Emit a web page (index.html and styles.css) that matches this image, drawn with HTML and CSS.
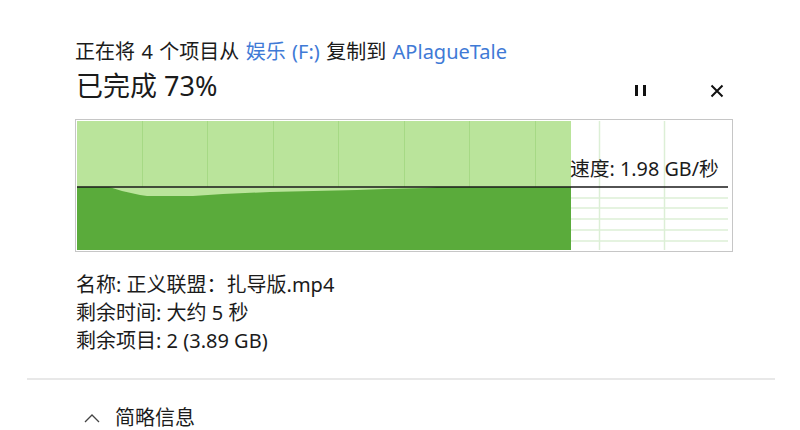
FILE: index.html
```html
<!DOCTYPE html>
<html lang="zh-CN">
<head>
<meta charset="utf-8">
<link rel="stylesheet" href="styles.css">
</head>
<body>
<div class="dialog">
  <div class="main">
    <div class="title">正在将 4 个项目从 <span class="link">娱乐 (F:)</span> 复制到 <span class="link">APlagueTale</span></div>
    <div class="status">
      <div class="percent">已完成 73%</div>
      <div class="controls">
        <svg class="icon pause" width="14" height="14" viewBox="0 0 14 14"><rect x="1" y="1" width="3" height="11" fill="#111"/><rect x="9" y="1" width="3" height="11" fill="#111"/></svg>
        <svg class="icon close" width="14" height="14" viewBox="0 0 14 14"><path d="M1.5 1.5 L12.5 12.5 M12.5 1.5 L1.5 12.5" stroke="#111" stroke-width="2" fill="none"/></svg>
      </div>
    </div>
    <div class="graph">
      <svg width="654" height="129" viewBox="0 0 654 129">
        <rect x="0" y="0" width="494" height="66" fill="#bae49b"/>
        <rect x="0" y="66" width="494" height="63" fill="#5aab3b"/>
        <polygon points="32,66 45,70 63,74 70,75 116,75 146,73 193,71 280,69 308,68 350,67 360,66" fill="#bae49b"/>
        <g stroke="#a6d985" stroke-width="1">
          <line x1="65.5" y1="0" x2="65.5" y2="66"/>
          <line x1="130.5" y1="0" x2="130.5" y2="66"/>
          <line x1="196.5" y1="0" x2="196.5" y2="66"/>
          <line x1="261.5" y1="0" x2="261.5" y2="66"/>
          <line x1="327.5" y1="0" x2="327.5" y2="66"/>
          <line x1="392.5" y1="0" x2="392.5" y2="66"/>
          <line x1="458.5" y1="0" x2="458.5" y2="66"/>
        </g>
        <g stroke="#dcefd6" stroke-width="1.5">
          <line x1="522.5" y1="0" x2="522.5" y2="129"/>
          <line x1="587.5" y1="0" x2="587.5" y2="129"/>
          <line x1="494" y1="77" x2="651" y2="77"/>
          <line x1="494" y1="87" x2="651" y2="87"/>
          <line x1="494" y1="98" x2="651" y2="98"/>
          <line x1="494" y1="109" x2="651" y2="109"/>
          <line x1="494" y1="120" x2="651" y2="120"/>
        </g>
        <line x1="0" y1="66" x2="651" y2="66" stroke="#1a1a1a" stroke-width="1.5"/>
      </svg>
      <div class="speed">速度: 1.98 GB/秒</div>
    </div>
    <div class="details">
      <div>名称: 正义联盟：扎导版.mp4</div>
      <div>剩余时间: 大约 5 秒</div>
      <div>剩余项目: 2 (3.89 GB)</div>
    </div>
  </div>
  <div class="separator"></div>
  <div class="footer">
    <svg class="chevron" width="16" height="10" viewBox="0 0 16 10"><path d="M1 9 L8 2 L15 9" stroke="#444" stroke-width="1.3" fill="none"/></svg>
    <span>简略信息</span>
  </div>
</div>
</body>
</html>
```
FILE: styles.css
```css
html, body {
  margin: 0;
  padding: 0;
  background: #ffffff;
}
body {
  font-family: "Noto Sans", "Noto Sans CJK SC", sans-serif;
  color: #1b1b1b;
  width: 800px;
  height: 430px;
  overflow: hidden;
}
.dialog {
  padding-top: 38px;
}
.main {
  padding-left: 75px;
  width: 657px;
}
.title {
  font-size: 20px;
  word-spacing: 1.2px;
  line-height: 28px;
  height: 28px;
  white-space: nowrap;
}
.link {
  color: #3f7ad6;
}
.status {
  display: flex;
  align-items: center;
  justify-content: space-between;
  height: 40px;
}
.percent {
  font-size: 27px;
  line-height: 34px;
  padding-left: 1px;
}
.controls {
  display: flex;
  align-items: center;
  gap: 62px;
  padding-right: 8px;
  padding-top: 9px;
}
.icon {
  display: block;
}
.graph {
  position: relative;
  margin-top: 13px;
  width: 654px;
  height: 129px;
  border: 1px solid #c6c6c6;
  padding: 1px;
}
.graph svg {
  display: block;
}
.speed {
  position: absolute;
  left: 494px;
  top: 36px;
  font-size: 19.8px;
  line-height: 26px;
  white-space: nowrap;
}
.details {
  margin-top: 19px;
  font-size: 20px;
  line-height: 28px;
  padding-left: 1px;
}
.separator {
  margin: 23px 25px 0 27px;
  height: 2px;
  background: #e8e8e8;
}
.footer {
  display: flex;
  align-items: center;
  gap: 15px;
  padding-left: 84px;
  margin-top: 24px;
  font-size: 20px;
  line-height: 28px;
}
.chevron {
  display: block;
}
```
